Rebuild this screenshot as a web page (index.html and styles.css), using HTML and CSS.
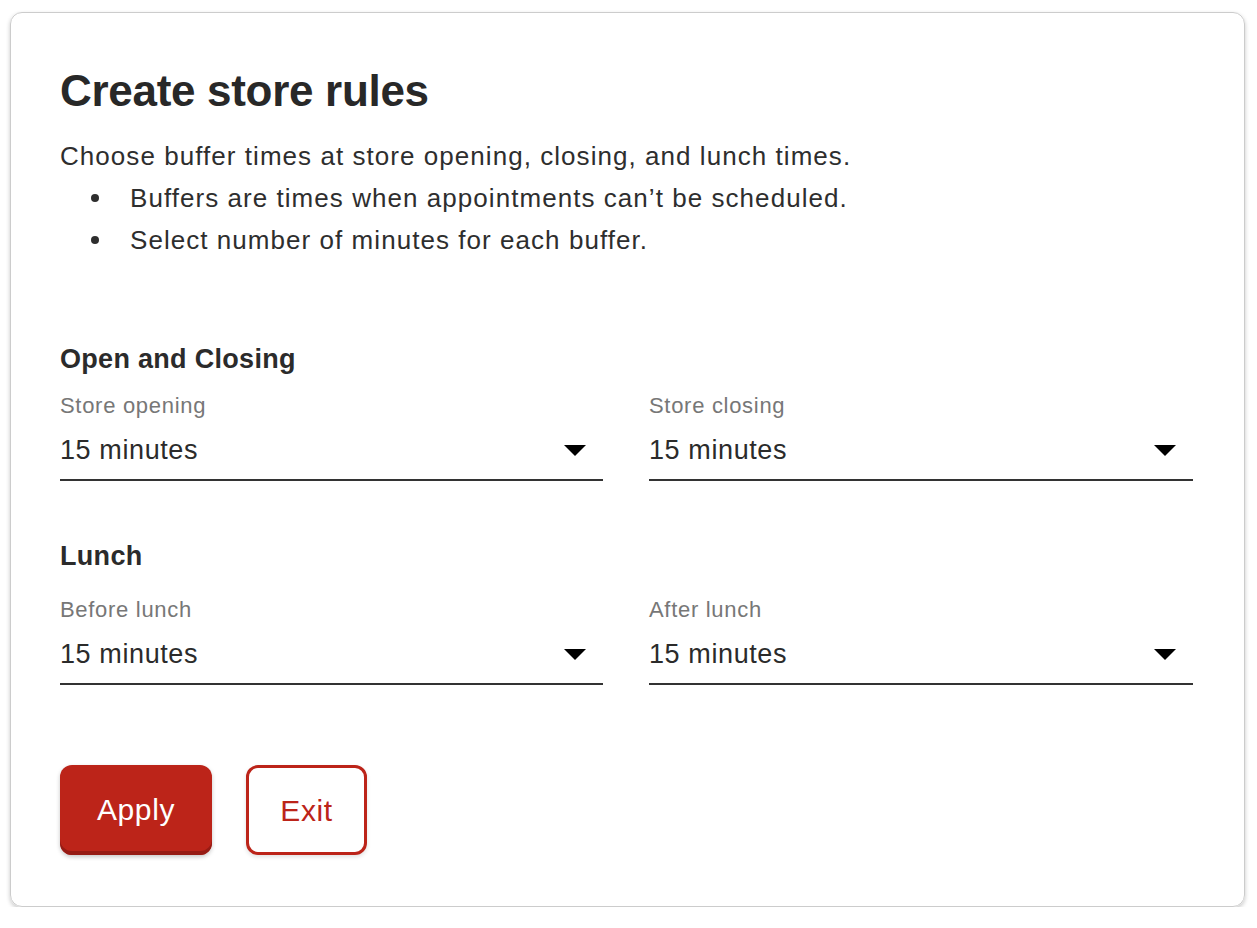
FILE: index.html
```html
<!DOCTYPE html>
<html lang="en">
<head>
<meta charset="utf-8">
<title>Create store rules</title>
<link rel="stylesheet" href="styles.css">
</head>
<body>
<div class="card">
  <h1 class="title">Create store rules</h1>
  <p class="intro">Choose buffer times at store opening, closing, and lunch times.</p>
  <ul class="bullets">
    <li>Buffers are times when appointments can’t be scheduled.</li>
    <li>Select number of minutes for each buffer.</li>
  </ul>

  <section class="group first">
    <h2 class="group-title">Open and Closing</h2>
    <div class="fields">
      <div class="field">
        <div class="label">Store opening</div>
        <div class="select"><span>15 minutes</span><svg class="caret" width="22" height="11" viewBox="0 0 22 11"><path d="M0 0H22L11 11Z" fill="#000"/></svg></div>
      </div>
      <div class="field">
        <div class="label">Store closing</div>
        <div class="select"><span>15 minutes</span><svg class="caret" width="22" height="11" viewBox="0 0 22 11"><path d="M0 0H22L11 11Z" fill="#000"/></svg></div>
      </div>
    </div>
  </section>

  <section class="group second">
    <h2 class="group-title">Lunch</h2>
    <div class="fields">
      <div class="field">
        <div class="label">Before lunch</div>
        <div class="select"><span>15 minutes</span><svg class="caret" width="22" height="11" viewBox="0 0 22 11"><path d="M0 0H22L11 11Z" fill="#000"/></svg></div>
      </div>
      <div class="field">
        <div class="label">After lunch</div>
        <div class="select"><span>15 minutes</span><svg class="caret" width="22" height="11" viewBox="0 0 22 11"><path d="M0 0H22L11 11Z" fill="#000"/></svg></div>
      </div>
    </div>
  </section>

  <div class="actions">
    <button class="btn btn-primary">Apply</button>
    <button class="btn btn-secondary">Exit</button>
  </div>
</div>
</body>
</html>
```

FILE: styles.css
```css
* { box-sizing: border-box; }
html, body { margin: 0; padding: 0; background: #fff; }
body {
  font-family: "Liberation Sans", Arial, sans-serif;
  color: #333;
  padding: 12px 12px 0 10px;
}
.card {
  width: 1235px;
  height: 895px;
  border: 1.5px solid #cccccc;
  border-radius: 12px;
  box-shadow: 0 2px 4px rgba(0,0,0,0.22);
  padding: 54px 50px 0 49px;
}
.title {
  margin: 0;
  font-size: 44px;
  line-height: 48px;
  font-weight: 700;
  color: #282828;
  letter-spacing: -0.3px;
}
.intro {
  margin: 20px 0 0;
  font-size: 26px;
  line-height: 42px;
  color: #2e2e2e;
  letter-spacing: 1.05px;
}
.bullets {
  list-style: none;
  margin: 0;
  padding: 0;
  font-size: 26px;
  line-height: 42px;
  color: #2e2e2e;
  letter-spacing: 1.05px;
}
.bullets li {
  display: flex;
  align-items: center;
  padding-left: 31px;
}
.bullets li::before {
  content: "";
  flex: none;
  width: 8px;
  height: 8px;
  border-radius: 50%;
  background: #2e2e2e;
  margin-right: 31px;
}
.group.first { margin-top: 82px; }
.group.second { margin-top: 59px; }
.group-title {
  margin: 0;
  font-size: 27px;
  line-height: 32px;
  font-weight: 700;
  color: #2b2b2b;
  letter-spacing: 0.3px;
}
.fields {
  display: grid;
  grid-template-columns: 543px 544px;
  column-gap: 46px;
  margin-top: 18px;
}
.group.second .fields { margin-top: 25px; }
.label {
  font-size: 22px;
  line-height: 26px;
  color: #777;
  letter-spacing: 0.7px;
}
.select {
  display: flex;
  align-items: center;
  justify-content: space-between;
  padding: 15px 17px 13px 0;
  line-height: 32px;
  border-bottom: 2px solid #333;
  font-size: 27px;
  color: #2b2b2b;
  letter-spacing: 0.6px;
}
.caret { display: block; }
.actions {
  display: flex;
  gap: 34px;
  margin-top: 80px;
}
.btn {
  font-family: "Liberation Sans", Arial, sans-serif;
  font-size: 30px;
  letter-spacing: 0.6px;
  height: 90px;
  border-radius: 12px;
  cursor: pointer;
}
.btn-primary {
  width: 152px;
  background: #bc2419;
  color: #fff;
  border: none;
  box-shadow: inset 0 -4px 0 #961b14, 0 2px 4px rgba(0,0,0,0.22);
  padding-bottom: 2px;
}
.btn-secondary {
  width: 121px;
  background: #fff;
  color: #bc2419;
  border: 3px solid #bc2419;
  box-shadow: 0 2px 4px rgba(0,0,0,0.12);
  padding-bottom: 0;
}
```
